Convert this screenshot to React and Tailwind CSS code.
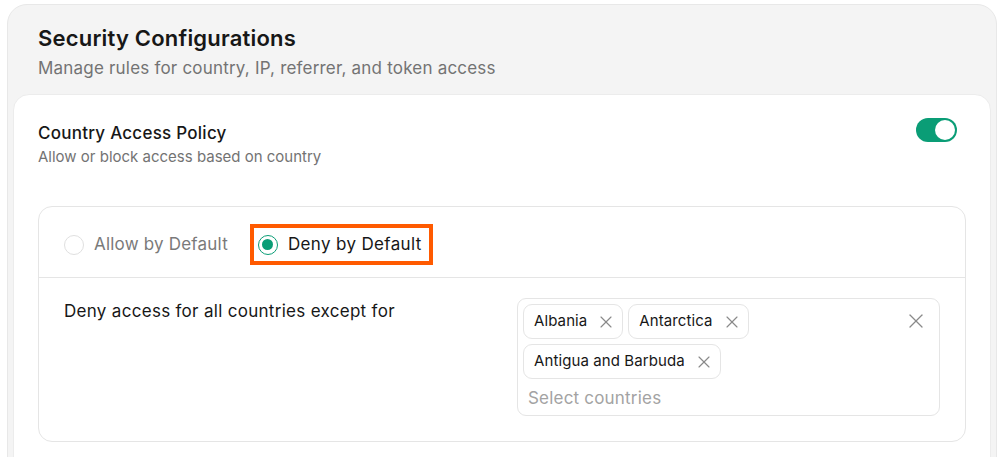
import { X } from "lucide-react";

const countries = ["Albania", "Antarctica", "Antigua and Barbuda"];

const Chip = ({ name }) => (
  <div className="flex h-[35px] items-center gap-[9px] rounded-[9px] border border-[#e5e5e5] bg-white pl-[10px] pr-[6px] text-[15px] tracking-[0.1px] text-[#171717]">
    <span>{name}</span>
    <X size={20} strokeWidth={1.4} className="text-[#8a8a8a]" />
  </div>
);

const App = () => {
  return (
    <div className="min-h-screen bg-white pl-[7px] pt-[4px]" style={{ fontFamily: "Inter, 'Noto Sans', sans-serif" }}>
      <div className="h-[460px] w-[990px] rounded-t-[20px] border border-[#e8e8e8] bg-[#f4f4f4] px-[5px] pt-[19px]">
        <div className="pl-[25px]">
          <h1 className="text-[22px] font-semibold leading-[28px] tracking-[0.2px] text-[#171717]">Security Configurations</h1>
          <p className="mt-[4px] text-[17px] leading-[24px] tracking-[0.2px] text-[#737373]">
            Manage rules for country, IP, referrer, and token access
          </p>
        </div>

        <div className="mt-[14px] h-[400px] rounded-t-[16px] border border-[#ececec] bg-white px-[24px] pt-[26px]">
          <div className="flex items-start justify-between">
            <div>
              <h2 className="text-[17px] font-medium leading-[24px] tracking-[0.25px] text-[#171717]">Country Access Policy</h2>
              <p className="mt-[2px] text-[15px] leading-[20px] text-[#737373]">Allow or block access based on country</p>
            </div>
            <div className="mr-[9px] mt-[-3px] flex h-[24px] w-[41px] items-center justify-end rounded-full bg-[#0a9d76] px-[2px]">
              <div className="h-[20px] w-[20px] rounded-full bg-white" />
            </div>
          </div>

          <div className="mt-[39px] rounded-[14px] border border-[#e5e5e5]">
            <div className="flex h-[71px] items-center border-b border-[#e5e5e5] px-[25px] pt-[5px]">
              <label className="flex items-center gap-[10px] text-[17px] tracking-[0.2px] text-[#7a7a7a]">
                <span className="h-[20px] w-[20px] rounded-full border border-[#e0e0e0] bg-white" />
                Allow by Default
              </label>
              <label className="ml-[22px] flex h-[41px] items-center gap-[10px] border-[4px] border-[#ff5a00] pl-[4px] pr-[7px] text-[17px] tracking-[0.35px] text-[#171717]">
                <span className="flex h-[20px] w-[20px] items-center justify-center rounded-full border-[1.5px] border-[#0a9d76]">
                  <span className="h-[11px] w-[11px] rounded-full bg-[#0a9d76]" />
                </span>
                Deny by Default
              </label>
            </div>

            <div className="grid grid-cols-2 gap-[30px] px-[25px] pb-[25px] pt-[20px]">
              <p className="pt-[1px] text-[17px] leading-[24px] tracking-[0.3px] text-[#171717]">
                Deny access for all countries except for
              </p>
              <div className="flex items-start rounded-[9px] border border-[#e5e5e5] bg-white py-[5px] pl-[5px] pr-[11px]">
                <div className="flex-1">
                  <div className="flex w-[230px] flex-wrap gap-[5px]">
                    {countries.map((c) => (
                      <Chip key={c} name={c} />
                    ))}
                  </div>
                  <div className="pl-[5px] pt-[7px] text-[17px] leading-[24px] tracking-[0.2px] text-[#a3a3a3]">Select countries</div>
                </div>
                <X size={24} strokeWidth={1.3} className="mt-[5px] text-[#8a8a8a]" />
              </div>
            </div>
          </div>
        </div>
      </div>
    </div>
  );
};

export default App;
